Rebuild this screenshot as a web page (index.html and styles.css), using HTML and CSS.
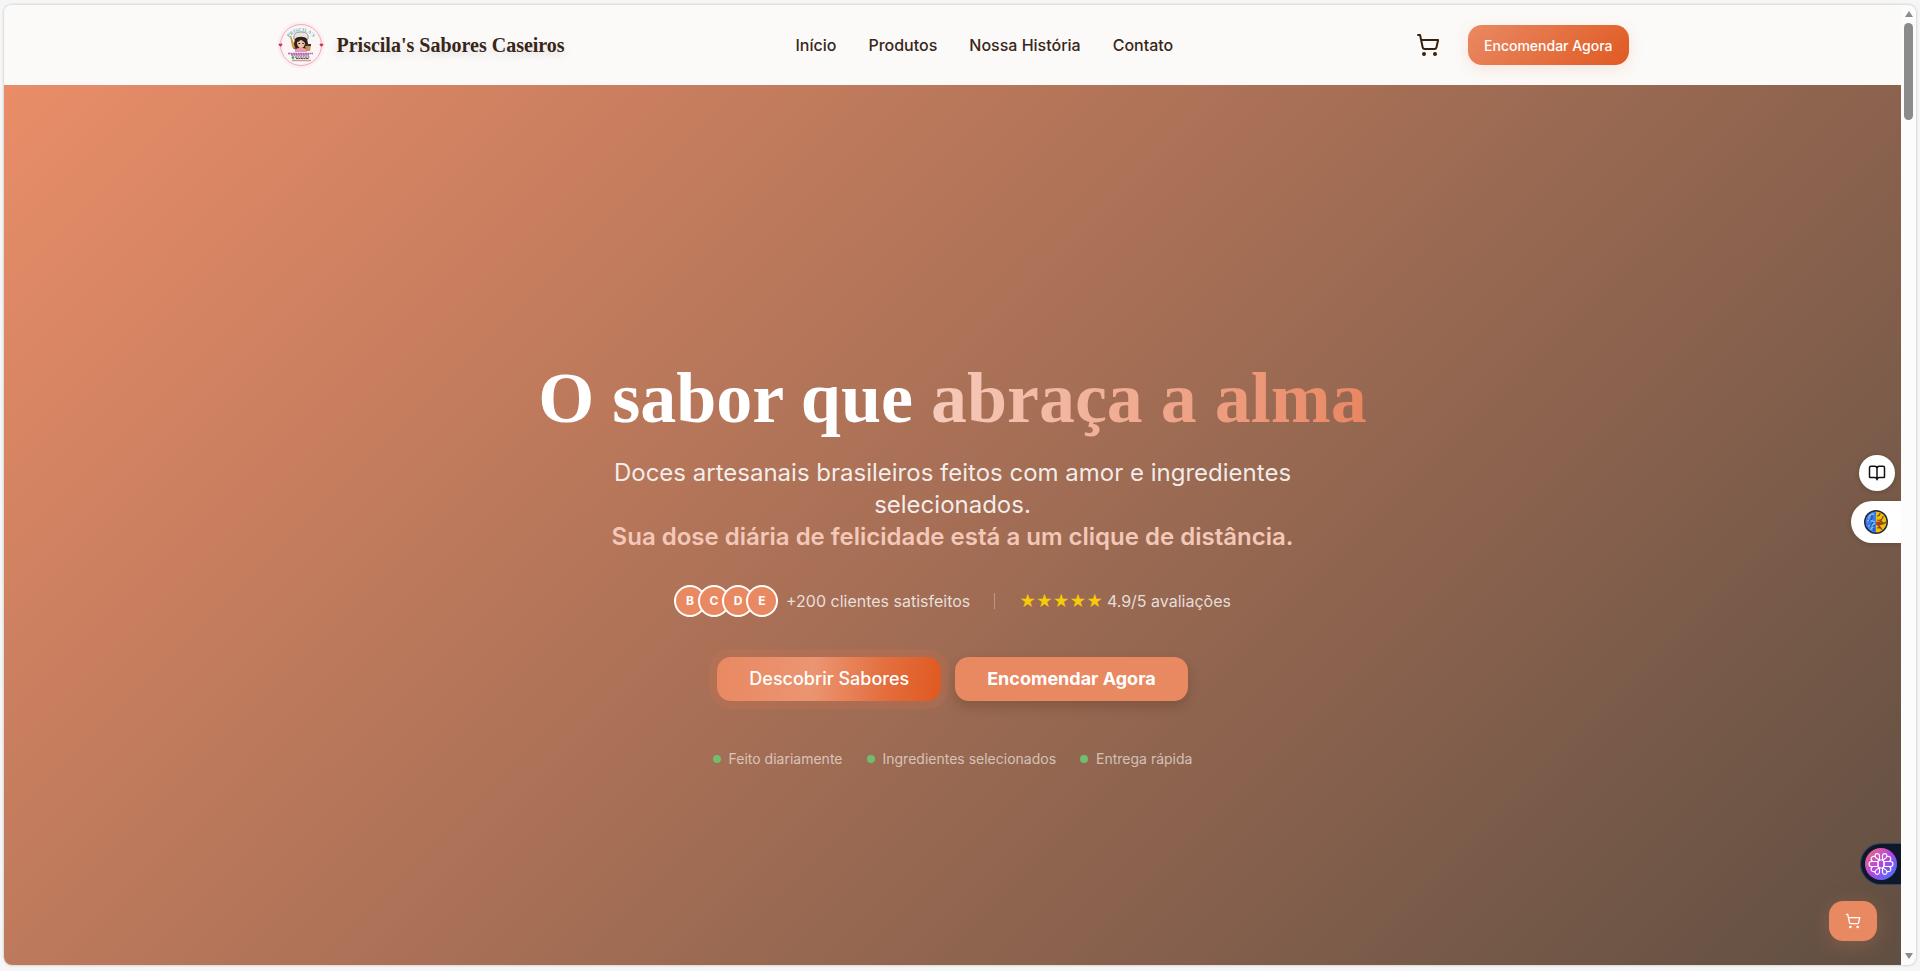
FILE: index.html
```html
<!DOCTYPE html>
<html lang="pt-BR">
<head>
    <meta charset="UTF-8">
    <meta name="viewport" content="width=device-width, initial-scale=1.0">
    <title>Priscila's Sabores Caseiros</title>
    <link rel="stylesheet" href="styles.css">
</head>
<body>
<div class="window">
    <div class="page">
        <header class="header">
            <div class="container">
                <a class="brand" href="#inicio">
                    <svg class="logo" viewBox="0 0 48 48" aria-hidden="true">
                        <defs><path id="arc" d="M10.500 19.500A14.500 14.500 0 0 1 37.500 19.500"/></defs>
                        <circle cx="24" cy="24" r="23.500" fill="#fdeff1"/>
                        <circle cx="24" cy="24" r="20.500" fill="none" stroke="#e3b3bd"/>
                        <circle cx="24" cy="24" r="19" fill="#fbf5f5"/>
                        <text class="logo-arc"><textPath href="#arc" startOffset="50%" text-anchor="middle">PRISCILA'S</textPath></text>
                        <path d="M3.500 25.800L1.600 24a1.100 1.100 0 0 1 1.900-1 1.100 1.100 0 0 1 1.900 1zM44.500 25.800L42.600 24a1.100 1.100 0 0 1 1.900-1 1.100 1.100 0 0 1 1.900 1z" fill="#d5304a"/>
                        <path d="M17 18c-1-5 2-7 7-7s8 2 7 7l-2 1H19z" fill="#e8e5e3" stroke="#77716f" stroke-width=".7"/>
                        <path d="M18 18c2-3 10-3 12 0l2 9-3 2H19l-3-2z" fill="#30211f"/>
                        <path d="M20 21c2 0 3-2 4-2s3 2 4 3c0 3-2 5-4 5s-4-2-4-6z" fill="#efc2a5"/>
                        <path d="M21.500 22.500h1.500M25.300 22.500h1.500" stroke="#2b1c1a"/>
                        <path d="M13.500 15l3 7 2 6-3-2z" fill="#e0a436" stroke="#a86c1b" stroke-width=".5"/>
                        <path d="M18 29c2-3 10-3 12 0v2H18z" fill="#e99bb6"/>
                        <path d="M28 24h6l-1 6h-4z" fill="#c69551"/>
                        <path d="M28 23h6v2h-6z" fill="#423026"/>
                        <path d="M11 32.500h25M14 34h18" stroke="#b267b4" stroke-width="1.500" stroke-dasharray="2 .4"/>
                        <circle cx="16" cy="36.500" r="1.500" fill="#35bd52"/>
                        <path d="M18 36h15M19 37.500h13" stroke="#57504e" stroke-dasharray="2 .5"/>
                        <path d="M15 39.500h19" stroke="#cf9b9e" stroke-width="1.500"/>
                    </svg>
                    <span>Priscila's Sabores Caseiros</span>
                </a>
                <nav class="nav">
                    <a href="#inicio">Início</a>
                    <a href="#produtos">Produtos</a>
                    <a href="#historia">Nossa História</a>
                    <a href="#contato">Contato</a>
                </nav>
                <div class="actions">
                    <button class="cart-btn" type="button" aria-label="Carrinho">
                        <svg class="icon" viewBox="0 0 24 24"><circle cx="8" cy="21" r="1"/><circle cx="19" cy="21" r="1"/><path d="M2.050 2.050h2l2.660 12.420a2 2 0 0 0 2 1.580h9.780a2 2 0 0 0 1.950-1.570l1.650-7.430H5.120"/></svg>
                    </button>
                    <button class="order-btn" type="button">Encomendar Agora</button>
                </div>
            </div>
        </header>

        <main class="hero" id="inicio">
            <h1>O sabor que <span>abraça a alma</span></h1>
            <p class="lead">Doces artesanais brasileiros feitos com amor e ingredientes selecionados. <strong>Sua dose diária de felicidade está a um clique de distância.</strong></p>

            <div class="proof">
                <div class="clients">
                    <div class="avatars">
                        <span>B</span><span>C</span><span>D</span><span>E</span>
                    </div>
                    <span>+200 clientes satisfeitos</span>
                </div>
                <div class="divider"></div>
                <div class="rating"><span class="stars">★★★★★</span><span>4.9/5 avaliações</span></div>
            </div>

            <div class="hero-actions">
                <button class="hero-btn discover" type="button">Descobrir Sabores</button>
                <button class="hero-btn order" type="button">Encomendar Agora</button>
            </div>

            <ul class="perks">
                <li>Feito diariamente</li>
                <li>Ingredientes selecionados</li>
                <li>Entrega rápida</li>
            </ul>
        </main>

        <div class="side-tools">
            <button class="reader" type="button" aria-label="Modo leitura">
                <svg class="icon" viewBox="0 0 24 24"><path d="M12 6v15M3 18a1 1 0 0 1-1-1V5a2 2 0 0 1 2-2h5a3 3 0 0 1 3 3 3 3 0 0 1 3-3h5a2 2 0 0 1 2 2v12a1 1 0 0 1-1 1h-6a3 3 0 0 0-3 3 3 3 0 0 0-3-3z"/></svg>
            </button>
            <button class="brain-tab" type="button" aria-label="Assistente">
                <svg viewBox="0 0 24 24">
                    <circle cx="12" cy="12" r="12" fill="#272b35"/>
                    <path d="M12 1.500a10.500 10.500 0 0 0 0 21z" fill="#397ee8"/>
                    <path d="M12 1.500a10.500 10.500 0 0 1 0 21z" fill="#f3bd09"/>
                    <path d="M12 12l5-1 2 3-4 2-3-1z" fill="#df371d"/>
                    <path d="M10 4c-4 0-6 3-5 5M3 11c3-2 5 0 8 1M4 16c3 1 5-1 7-3M7 20c0-2 2-3 4-3" fill="none" stroke="#85b9fa" stroke-width="1.300"/>
                    <path d="M13 6c2 0 3-1 3-3M13 10c4 1 6-1 6-4M14 13c3 2 6 1 8-1M13 18c3-1 5 1 5 2M16 10l4 4M14 15l3 3" fill="none" stroke="#70521d" stroke-width="1.200"/>
                    <path d="M8 5v4l-3 2M9 12l-3 5M10 15v6" fill="none" stroke="#1c4596"/>
                </svg>
            </button>
        </div>

        <button class="flower-tab" type="button" aria-label="Abrir painel">
            <svg viewBox="0 0 32 32">
                <defs>
                    <linearGradient id="glow" x1="0" y1="0" x2="1" y2="1">
                        <stop offset="0" stop-color="#f5746c"/>
                        <stop offset=".5" stop-color="#b443e4"/>
                        <stop offset="1" stop-color="#287eff"/>
                    </linearGradient>
                </defs>
                <circle cx="16" cy="16" r="16" fill="url(#glow)"/>
                <g fill="none" stroke="#fff" stroke-width="1.200" stroke-linejoin="round">
                    <path d="M13 13.500H6.500a2.500 2.500 0 0 0 0 5H13zM19 13.500h6.500a2.500 2.500 0 0 1 0 5H19z"/>
                    <path d="M14.500 12V7.500a2.300 2.300 0 0 0-4.500 0c0 2 2 3.500 4.500 4.500zM17.500 12V7.500a2.300 2.300 0 0 1 4.500 0c0 2-2 3.500-4.500 4.500zM14.500 20v4.500a2.300 2.300 0 0 1-4.500 0c0-2 2-3.500 4.500-4.500zM17.500 20v4.500a2.300 2.300 0 0 0 4.500 0c0-2-2-3.500-4.500-4.500z"/>
                    <path d="M10 8.500c-4-1-5 3-2.500 5M22 8.500c4-1 5 3 2.500 5M10 23.500c-4 1-5-3-2.500-5M22 23.500c4 1 5-3 2.500-5"/>
                    <path d="M14.500 12L13 13.500v5l1.500 1.500h3l1.500-1.500v-5L17.500 12z"/>
                </g>
            </svg>
        </button>

        <button class="float-cart" type="button" aria-label="Abrir carrinho">
            <svg class="icon" viewBox="0 0 24 24"><circle cx="8" cy="21" r="1"/><circle cx="19" cy="21" r="1"/><path d="M2.050 2.050h2l2.660 12.420a2 2 0 0 0 2 1.580h9.780a2 2 0 0 0 1.950-1.570l1.650-7.430H5.120"/></svg>
        </button>
    </div>

    <div class="scrollbar" aria-hidden="true">
        <svg viewBox="0 0 8 6"><path d="M4 0L8 6H0z"/></svg>
        <div class="thumb"></div>
        <svg viewBox="0 0 8 6"><path d="M0 0h8L4 6z"/></svg>
    </div>
</div>
</body>
</html>
```
FILE: styles.css
```css
*{box-sizing:border-box;}
body,h1,p,ul{margin:0;padding:0;}
ul{list-style-type:none;}
a{color:inherit;text-decoration:none;}
button{border:0;padding:0;font-family:inherit;cursor:pointer;}
svg{display:block;}
body{display:flex;height:100vh;padding:5px 4px 6px;background:#f6f6f6;color:#38261a;font:16px/24px Inter,sans-serif;}

.window{flex:1;display:flex;overflow:hidden;background:#fcfcfc;border-radius:8px;box-shadow:0 0 3px rgba(0,0,0,.25);}
.page{position:relative;flex:1;display:flex;flex-direction:column;overflow:hidden;}
.icon{width:24px;height:24px;fill:none;stroke:currentColor;stroke-width:2;stroke-linecap:round;stroke-linejoin:round;}

/* header */
.header{height:80px;background:#fbfaf8;}
.container{display:flex;align-items:center;justify-content:space-between;max-width:1400px;height:100%;margin:0 auto;padding:0 24px;}
.brand{display:flex;align-items:center;gap:12px;font:bold 20px/28px "Liberation Serif",serif;text-shadow:0 4px 8px rgba(0,0,0,.12);}
.logo{width:48px;height:48px;}
.logo-arc{font:bold 5px "Liberation Serif",serif;fill:#6cb8b5;}
.nav{display:flex;gap:32px;font-weight:500;}
.actions{display:flex;align-items:center;gap:16px;}
.cart-btn{display:flex;align-items:center;justify-content:center;width:48px;height:40px;background:none;color:#38200f;}
.order-btn{height:40px;padding:0 16px;border-radius:14px;background:linear-gradient(135deg,#e98963,#e05a22);color:#fff;font-size:14px;font-weight:500;box-shadow:0 4px 16px rgba(232,90,60,.14);}

/* hero */
.hero{flex:1;display:flex;flex-direction:column;align-items:center;justify-content:center;padding-top:80px;background:linear-gradient(135deg,#e98d68,#604f42);color:#fff;text-align:center;}
.hero h1{margin-bottom:22px;font:bold 72px/74px "Liberation Serif",serif;}
.hero h1 span{background:linear-gradient(90deg,#f6cbbb,#e98661);-webkit-background-clip:text;background-clip:text;color:transparent;}
.lead{max-width:768px;margin-bottom:32px;color:rgba(255,255,255,.88);font-size:24px;line-height:32px;}
.lead strong{display:block;color:#f4c8b8;font-weight:600;}

.proof{display:flex;align-items:center;gap:24px;margin-bottom:40px;color:rgba(255,255,255,.78);}
.clients{display:flex;align-items:center;gap:8px;}
.avatars{display:flex;}
.avatars span{width:32px;height:32px;border:2px solid #fff;border-radius:50%;background:#e98962;color:#fff;font-size:12px;font-weight:700;line-height:28px;}
.avatars span+span{margin-left:-8px;}
.divider{width:1px;height:16px;background:rgba(255,255,255,.3);}
.rating{display:flex;align-items:center;gap:4px;}
.stars{color:#f7cb08;}

.hero-actions{display:flex;gap:14px;margin-bottom:48px;}
.hero-btn{height:44px;padding:0 32px;border-radius:14px;color:#fff;font-size:18px;line-height:28px;}
.discover{background:linear-gradient(90deg,rgba(255,255,255,0),rgba(255,255,255,.1) 43%,transparent 75%),linear-gradient(100deg,#e98962 42%,#e05a22 98%);font-weight:500;box-shadow:0 0 0 8px rgba(233,120,80,.16);}
.order{background:#e98962;font-weight:700;box-shadow:0 6px 12px rgba(60,30,15,.22);}

.perks{display:flex;gap:24px;color:rgba(255,255,255,.6);font-size:14px;line-height:20px;}
.perks li{display:flex;align-items:center;gap:8px;}
.perks li::before{content:"";width:8px;height:8px;border-radius:50%;background:#72bd6e;}

/* floating controls */
.side-tools{position:absolute;top:450px;right:0;display:flex;flex-direction:column;align-items:flex-end;gap:10px;}
.side-tools button{display:flex;align-items:center;justify-content:center;background:#fff;box-shadow:0 1px 5px rgba(0,0,0,.18);}
.side-tools .reader{width:36px;height:36px;margin-right:6px;border-radius:50%;color:#111;}
.reader .icon{width:18px;height:18px;}
.side-tools .brain-tab{width:50px;height:42px;border-radius:21px 0 0 21px;}
.brain-tab svg{width:24px;height:24px;}
.flower-tab{position:absolute;right:0;bottom:80px;display:flex;align-items:center;width:41px;height:42px;padding-left:4px;border:1px solid #34435b;border-right:0;border-radius:21px 0 0 21px;background:#0f172a;}
.flower-tab svg{width:32px;height:32px;}
.float-cart{position:absolute;right:24px;bottom:24px;display:flex;align-items:center;justify-content:center;width:48px;height:40px;border-radius:14px;background:#e98962;color:#fff;box-shadow:0 4px 20px rgba(233,137,98,.25);}
.float-cart .icon{width:16px;height:16px;}

/* scrollbar */
.scrollbar{display:flex;flex-direction:column;align-items:center;width:15px;padding:6px 0;}
.scrollbar svg{width:8px;height:6px;fill:#8b8b8b;}
.thumb{width:9px;height:97px;margin:6px 0 auto;border-radius:5px;background:#8b8b8b;}
```
